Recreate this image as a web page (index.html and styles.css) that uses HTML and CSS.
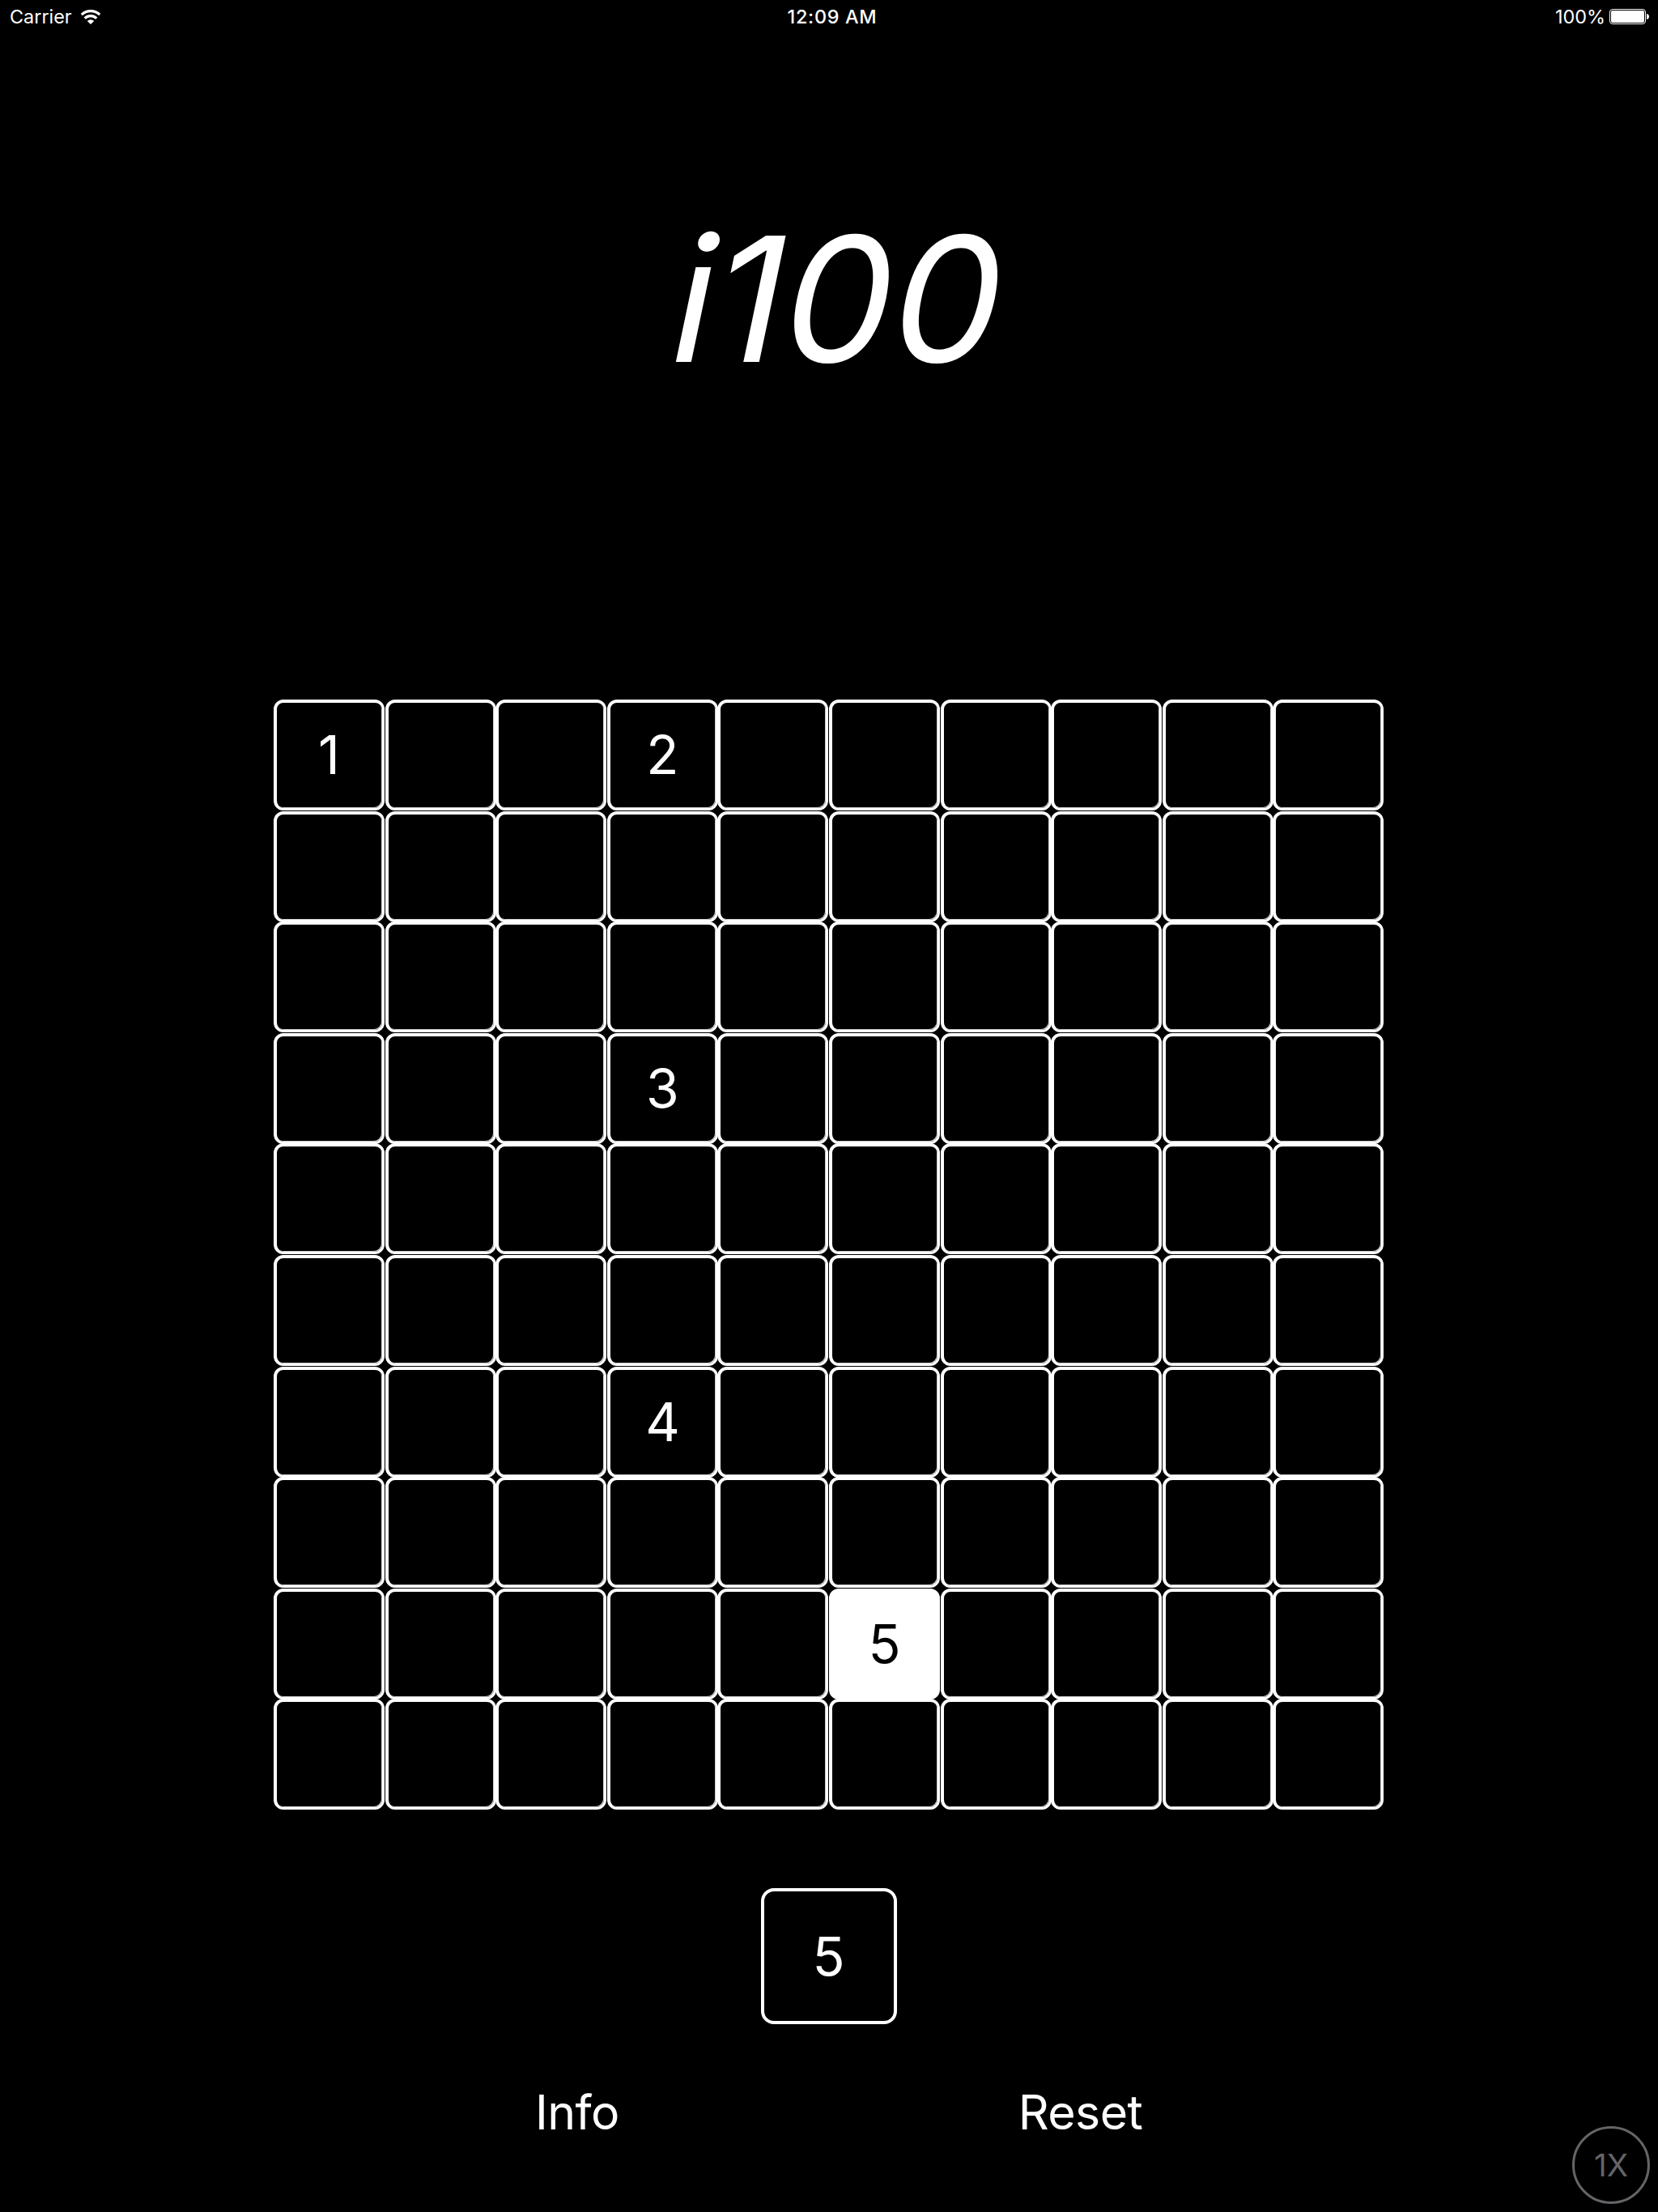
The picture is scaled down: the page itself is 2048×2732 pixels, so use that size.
FILE: index.html
```html
<!DOCTYPE html>
<html lang="en">
<head>
<meta charset="utf-8">
<title>i100</title>
<link rel="stylesheet" href="styles.css">
</head>
<body>
<header class="status">
  <div class="status-left"><span class="carrier">Carrier</span>
    <svg class="wifi" width="26" height="20" viewBox="0 0 26 20"><g fill="none" stroke="#fff" stroke-width="3.2"><path d="M1.8 7.2a16 16 0 0 1 22.4 0"/><path d="M5.7 11.7a10.4 10.4 0 0 1 14.6 0"/></g><path fill="#fff" d="M13 19l-4.2-4.1a6 6 0 0 1 8.4 0z"/></svg>
  </div>
  <div class="clock">12:09 AM</div>
  <div class="status-right"><span class="percent">100%</span>
    <svg class="battery" width="50" height="20" viewBox="0 0 50 20"><rect x=".5" y=".5" width="44" height="18" rx="3.5" fill="none" stroke="#fff" stroke-width="1"/><rect x="2" y="2" width="41" height="15" rx="2" fill="#fff"/><path fill="#fff" d="M46 6c4 .6 4 6.400 0 7z"/></svg>
  </div>
</header>
<h1 class="title">i100</h1>
<main class="board" id="board"></main>
<div class="next">5</div>
<nav class="actions"><button class="action info">Info</button><button class="action reset">Reset</button></nav>
<div class="scale">1X</div>
<script src="board.js"></script>
</body>
</html>
```
FILE: styles.css
```css
* { box-sizing: border-box; }
body {
  margin: 0;
  width: 2048px;
  height: 2732px;
  overflow: hidden;
  display: flex;
  flex-direction: column;
  align-items: center;
  position: relative;
  background: #000;
  color: #fff;
  font-family: Inter, "Liberation Sans", sans-serif;
}
.status {
  width: 100%;
  height: 42px;
  padding: 0 10px 0 12px;
  display: grid;
  grid-template-columns: 1fr auto 1fr;
  align-items: center;
  font-size: 23.4px;
  line-height: 42px;
}
.status-left, .status-right { display: flex; align-items: center; height: 42px; }
.status-right { justify-content: flex-end; }
.wifi { margin-left: 10px; }
.battery { margin-left: 5px; }
.clock { font-weight: 500; letter-spacing: 0.7px; padding-left: 6px; }
.title {
  margin: 167px 0 0;
  height: 320px;
  line-height: 320px;
  font-size: 214.5px;
  font-weight: 400;
  font-style: italic;
  padding-left: 14px;
  letter-spacing: -1px;
  transform: skewX(-2.5deg);
  transform-origin: 50% 74%;
}
.board {
  margin-top: 335px;
  margin-right: 1px;
  width: 1371px;
  display: grid;
  grid-template-columns: 138px 136px 138px 136px 138px 138px 136px 138px 136px 137px;
  grid-template-rows: 138px 136px 138px 136px 138px 138px 136px 138px 136px 137px;
}
.cell {
  width: 137px;
  height: 137px;
  border: solid #fff;
  border-width: 4px 3px 3px 4px;
  border-radius: 12px;
  box-shadow: inset -1px -1px #ccc;
  font-size: 66px;
  font-weight: 400;
  line-height: 129px;
  text-align: center;
  text-indent: -1px;
}
.cell.active { background: #fff; color: #000; box-shadow: none; }
.next {
  margin-top: 97px;
  width: 168px;
  height: 168px;
  border: 4px solid #fff;
  border-radius: 16px;
  font-size: 66px;
  font-weight: 400;
  line-height: 160px;
  text-align: center;
  text-indent: -1px;
}
.actions {
  width: 100%;
  margin-top: 69px;
  padding-left: 661px;
  display: flex;
  gap: 493px;
}
.action {
  border: 0;
  padding: 0;
  background: none;
  color: #fff;
  font: 400 59px/80px Inter, "Liberation Sans", sans-serif;
  letter-spacing: -0.6px;
}
.scale {
  position: absolute;
  left: 1942px;
  top: 2626px;
  width: 96px;
  height: 96px;
  border: 3px solid #656468;
  border-radius: 50%;
  color: #656468;
  font-size: 38.5px;
  line-height: 90px;
  text-align: center;
}
```
FILE: board.js
```js
const numbers = { 0: 1, 3: 2, 33: 3, 63: 4, 85: 5 };
const active = 85;
const board = document.getElementById('board');
for (let i = 0; i < 100; i++) {
  const cell = document.createElement('div');
  cell.className = i === active ? 'cell active' : 'cell';
  cell.textContent = numbers[i] || '';
  board.appendChild(cell);
}
```
